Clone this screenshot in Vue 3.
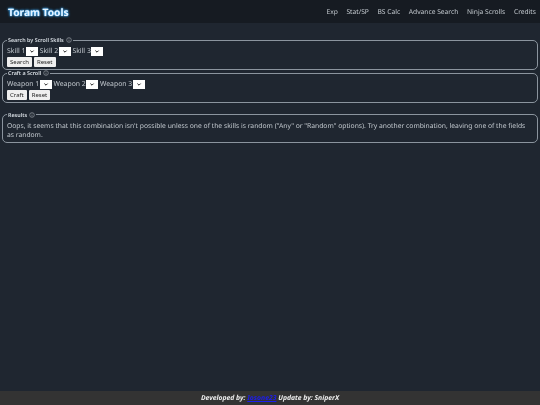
<script setup>
const links = ['Exp', 'Stat/SP', 'BS Calc', 'Advance Search', 'Ninja Scrolls', 'Credits']
const skills = ['Skill 1', 'Skill 2', 'Skill 3']
const weapons = ['Weapon 1', 'Weapon 2', 'Weapon 3']
</script>

<template>
  <div class="page">
    <nav class="nav">
      <span class="brand">Toram Tools</span>
      <div class="links">
        <a v-for="l in links" :key="l" class="link">{{ l }}</a>
      </div>
    </nav>
    <main class="main">
      <fieldset class="box">
        <legend class="legend">Search by Scroll Skills
          <svg class="info" viewBox="0 0 10 10"><circle cx="5" cy="5" r="3.9" /><path d="M5 4.4V7.4M5 2.6V3.5" /></svg>
        </legend>
        <div class="row">
          <template v-for="s in skills" :key="s">
            <label class="lab">{{ s }}</label><span class="sel"><svg viewBox="0 0 12 9"><path d="M4.4 3.6L6 5.2L7.6 3.6" /></svg></span>
          </template>
        </div>
        <div class="btns"><button class="btn">Search</button><button class="btn">Reset</button></div>
      </fieldset>
      <fieldset class="box">
        <legend class="legend">Craft a Scroll
          <svg class="info" viewBox="0 0 10 10"><circle cx="5" cy="5" r="3.9" /><path d="M5 4.4V7.4M5 2.6V3.5" /></svg>
        </legend>
        <div class="row">
          <template v-for="s in weapons" :key="s">
            <label class="lab">{{ s }}</label><span class="sel"><svg viewBox="0 0 12 9"><path d="M4.4 3.6L6 5.2L7.6 3.6" /></svg></span>
          </template>
        </div>
        <div class="btns"><button class="btn">Craft</button><button class="btn">Reset</button></div>
      </fieldset>
      <fieldset class="box results">
        <legend class="legend">Results
          <svg class="info" viewBox="0 0 10 10"><circle cx="5" cy="5" r="3.9" /><path d="M5 4.4V7.4M5 2.6V3.5" /></svg>
        </legend>
        <p class="msg">Oops, it seems that this combination isn't possible unless one of the skills is random ("Any" or "Random" options). Try another combination, leaving one of the fields as random.</p>
      </fieldset>
    </main>
    <footer class="foot">Developed by: <a class="dev">Iosone23</a> Update by: SniperX</footer>
  </div>
</template>

<style>
html, body { margin: 0; background: #1f2630; }
</style>

<style scoped>
.page {
  width: 540px;
  height: 405px;
  display: flex;
  flex-direction: column;
  background: #1f2630;
  font-family: "Noto Sans", sans-serif;
  color: #c2c8ce;
  overflow: hidden;
  text-rendering: geometricPrecision;
  filter: blur(0.3px);
}
.nav {
  height: 23px;
  flex: none;
  background: #161b22;
  display: flex;
  align-items: center;
  justify-content: space-between;
  padding: 0 4px 0 8px;
}
.brand {
  font-size: 10.2px;
  font-weight: 700;
  color: #e6f4ff;
  text-shadow: 0 0 1px #4db4ff, 0 0 2px #3fa9f5, 0 0 3px #3fa9f5;
}
.links { display: flex; gap: 8.6px; }
.link { font-size: 6.7px; color: #c2c8ce; }
.main {
  flex: 1;
  padding: 14px 2px 0;
  display: flex;
  flex-direction: column;
  gap: 0.5px;
}
.box {
  margin: 0;
  border: 1px solid #8b949e;
  border-radius: 5px;
  padding: 0 4px 2px;
  min-width: 0;
  height: 32.5px;
  box-sizing: border-box;
  flex: none;
}
.box.results { margin-top: 8.5px; height: 31.5px; }
.legend {
  font-size: 5.4px;
  font-weight: 600;
  padding: 0 1px;
  display: flex;
  align-items: center;
  gap: 2px;
  color: #d8dee4;
  height: 6px;
}
.info { width: 6px; height: 6px; fill: none; stroke: #c2c8ce; stroke-width: 0.8; }
.row { display: flex; align-items: center; height: 10px; margin-top: 3.5px; }
.lab { font-size: 6.85px; margin-left: 1.8px; }
.row .lab:first-child { margin-left: 0; }
.sel {
  width: 12px;
  height: 9px;
  background: #fff;
  margin-left: 0.5px;
  display: block;
}
.sel svg { display: block; width: 12px; height: 9px; fill: none; stroke: #222; stroke-width: 1; }
.btns { display: flex; gap: 2px; }
.btn {
  font-family: inherit;
  font-size: 6px;
  height: 10px;
  line-height: 10px;
  padding: 0 3px;
  border: 0;
  border-radius: 1px;
  background: #efefef;
  color: #222;
}
.msg { margin: 0; font-size: 6.75px; line-height: 8.7px; padding-top: 4.3px; }
.foot {
  height: 14px;
  flex: none;
  background: #333;
  color: #eee;
  font-size: 6.8px;
  font-weight: 700;
  font-style: italic;
  text-align: center;
  line-height: 14px;
}
.dev { color: #1c1cf0; text-decoration: underline; }
</style>
